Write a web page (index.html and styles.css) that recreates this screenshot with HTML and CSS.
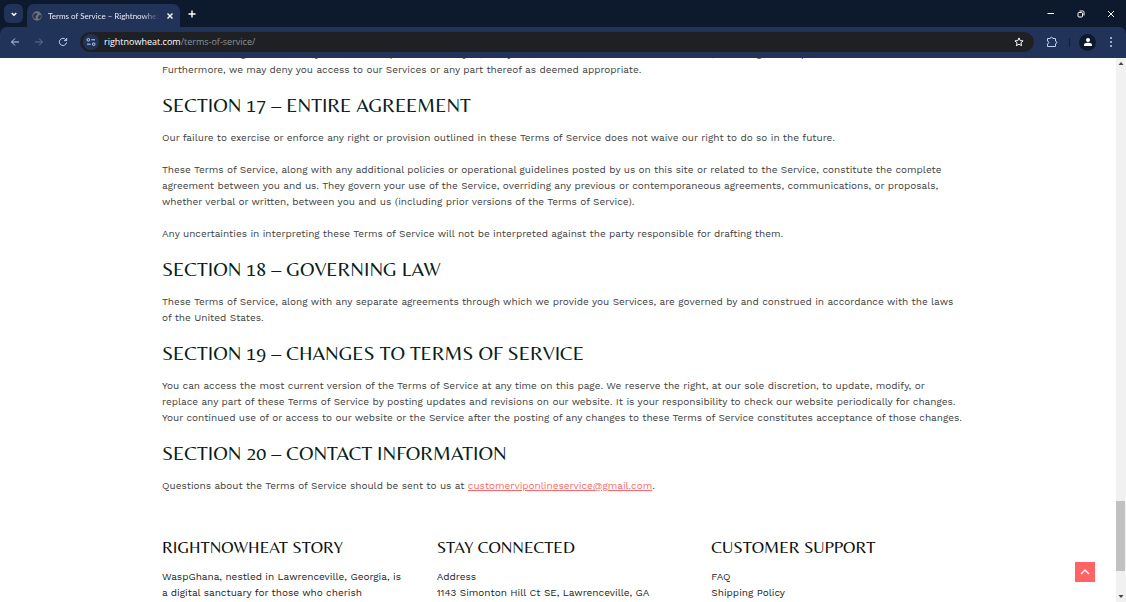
FILE: index.html
```html
<!DOCTYPE html>
<html lang="en">
<head>
<meta charset="utf-8">
<title>Terms of Service – Rightnowheat</title>
<link rel="stylesheet" href="styles.css">
</head>
<body>
<div class="browser">
  <header class="chrome">
    <div class="tabstrip">
      <button class="tab-search" type="button" aria-label="Search tabs">
        <svg width="8" height="8" viewBox="0 0 8 8" class="line bold"><path d="M1.700 3l2.300 2.300L6.300 3"/></svg>
      </button>
      <div class="tab">
        <svg width="10" height="10" viewBox="0 0 10 10"><circle cx="5" cy="5" r="4.700" fill="#6b7280"/><path d="M1.500 3.500L3.500 2l2 .5-.5 1.500-1.500 1 .5 1.500-1 1.500L1 6zM6.500 4.500l2.500-.5V6L7 8.500 6 7z" fill="#2c3448"/></svg>
        <span class="tab-title">Terms of Service – Rightnowheat</span>
        <button class="icon-button small" type="button" aria-label="Close tab">
          <svg width="8" height="8" viewBox="0 0 8 8" class="line bold"><path d="M1.500 1.500l5 5M6.500 1.500l-5 5"/></svg>
        </button>
      </div>
      <button class="icon-button new-tab" type="button" aria-label="New tab">
        <svg width="8" height="8" viewBox="0 0 8 8" class="line bold"><path d="M4 .5v7M.5 4h7"/></svg>
      </button>
      <div class="window-controls">
        <button class="icon-button" type="button" aria-label="Minimize"><svg width="8" height="8" viewBox="0 0 8 8" class="line"><path d="M.5 3.500h6.500"/></svg></button>
        <button class="icon-button" type="button" aria-label="Restore"><svg width="8" height="8" viewBox="0 0 8 8" class="line"><rect x="1" y="2.500" width="4.500" height="4.500" rx="1"/><path d="M2.500 1h3.200Q7 1 7 2.300v3.200"/></svg></button>
        <button class="icon-button" type="button" aria-label="Close window"><svg width="8" height="8" viewBox="0 0 8 8" class="line"><path d="M1 1l6 6M7 1L1 7"/></svg></button>
      </div>
    </div>
    <div class="toolbar">
      <button class="icon-button pale" type="button" aria-label="Back"><svg width="10" height="10" viewBox="0 0 10 10" class="line"><path d="M9 5H1.500M5 1.500L1.500 5 5 8.500"/></svg></button>
      <button class="icon-button dim" type="button" aria-label="Forward"><svg width="10" height="10" viewBox="0 0 10 10" class="line"><path d="M1 5h7.500M5 1.500L8.500 5 5 8.500"/></svg></button>
      <button class="icon-button pale" type="button" aria-label="Reload"><svg width="10" height="10" viewBox="0 0 10 10" class="line"><path d="M8.500 5.500A3.600 3.600 0 1 1 7.700 2.600L8.600 3.500M8.700 1v2.600H6.100"/></svg></button>
      <div class="omnibox">
        <button class="site-info" type="button" aria-label="View site information"><svg width="10" height="10" viewBox="0 0 10 10" class="line"><circle cx="2.300" cy="2.800" r="1.300"/><path d="M5.300 2.800H9M1 7.200h3.700"/><circle cx="7.700" cy="7.200" r="1.300"/></svg></button>
        <a class="url" href="#top"><span class="host">rightnowheat.com</span>/terms-of-service/</a>
        <button class="icon-button" type="button" aria-label="Bookmark this tab"><svg width="10" height="10" viewBox="0 0 10 10" class="line"><path d="M5 .9l1.200 2.700 2.900.3-2.200 1.900.7 2.900L5 7.200 2.400 8.700l.7-2.900L.9 3.900l2.900-.3z"/></svg></button>
      </div>
      <div class="actions">
        <button class="icon-button pale" type="button" aria-label="Extensions"><svg width="12" height="12" viewBox="0 0 12 12" class="line"><path d="M1.500 2.500h2.700a1.300 1.300 0 0 1 2.600 0h2.700v2.700a1.300 1.300 0 0 1 0 2.600v2.700h-8V7.800a1.300 1.300 0 0 0 0-2.600z"/></svg></button>
        <span class="divider"></span>
        <button class="profile" type="button" aria-label="Profile"><svg width="10" height="10" viewBox="0 0 10 10" fill="#fff"><circle cx="5" cy="3" r="2"/><path d="M1 9V8q0-2.200 4-2.200T9 8v1z"/></svg></button>
        <button class="icon-button pale" type="button" aria-label="Menu"><svg width="4" height="12" viewBox="0 0 4 12" fill="currentColor"><circle cx="2" cy="2" r="1"/><circle cx="2" cy="6" r="1"/><circle cx="2" cy="10" r="1"/></svg></button>
      </div>
    </div>
  </header>

  <div class="viewport">
    <div class="page" id="top">
      <main class="terms">
        <p>terminate this agreement at any time without prior notice to you, and you will remain liable for all amounts due, including costs up to then.<br>Furthermore, we may deny you access to our Services or any part thereof as deemed appropriate.</p>
        <h2>SECTION 17 – ENTIRE AGREEMENT</h2>
        <p>Our failure to exercise or enforce any right or provision outlined in these Terms of Service does not waive our right to do so in the future.</p>
        <p>These Terms of Service, along with any additional policies or operational guidelines posted by us on this site or related to the Service, constitute the complete<br>agreement between you and us. They govern your use of the Service, overriding any previous or contemporaneous agreements, communications, or proposals,<br>whether verbal or written, between you and us (including prior versions of the Terms of Service).</p>
        <p>Any uncertainties in interpreting these Terms of Service will not be interpreted against the party responsible for drafting them.</p>
        <h2>SECTION 18 – GOVERNING LAW</h2>
        <p>These Terms of Service, along with any separate agreements through which we provide you Services, are governed by and construed in accordance with the laws<br>of the United States.</p>
        <h2>SECTION 19 – CHANGES TO TERMS OF SERVICE</h2>
        <p>You can access the most current version of the Terms of Service at any time on this page. We reserve the right, at our sole discretion, to update, modify, or<br>replace any part of these Terms of Service by posting updates and revisions on our website. It is your responsibility to check our website periodically for changes.<br>Your continued use of or access to our website or the Service after the posting of any changes to these Terms of Service constitutes acceptance of those changes.</p>
        <h2>SECTION 20 – CONTACT INFORMATION</h2>
        <p>Questions about the Terms of Service should be sent to us at <a class="mail" href="mailto:customerviponlineservice@gmail.com">customerviponlineservice@gmail.com</a>.</p>
      </main>
      <footer class="footer">
        <section>
          <h3>RIGHTNOWHEAT STORY</h3>
          <p>WaspGhana, nestled in Lawrenceville, Georgia, is<br>a digital sanctuary for those who cherish</p>
        </section>
        <section>
          <h3>STAY CONNECTED</h3>
          <p>Address<br>1143 Simonton Hill Ct SE, Lawrenceville, GA</p>
        </section>
        <section>
          <h3>CUSTOMER SUPPORT</h3>
          <p><a href="#faq">FAQ</a><br><a href="#shipping">Shipping Policy</a></p>
        </section>
      </footer>
    </div>
    <div class="scrollbar">
      <svg width="6" height="4" viewBox="0 0 6 4"><path d="M3 0l2.500 3h-5z"/></svg>
      <div class="track"><div class="thumb"></div></div>
      <svg width="6" height="4" viewBox="0 0 6 4"><path d="M3 4L.5 1h5z"/></svg>
    </div>
    <button class="to-top" type="button" aria-label="Scroll to top"><svg width="10" height="10" viewBox="0 0 10 10" class="line bold"><path d="M1 7l4-4 4 4"/></svg></button>
  </div>
</div>
</body>
</html>
```
FILE: styles.css
```css
* {
  box-sizing: border-box;
}

body {
  margin: 0;
  background: #fff;
}

button {
  display: flex;
  align-items: center;
  justify-content: center;
  flex: none;
  margin: 0;
  padding: 0;
  border: 0;
  background: none;
  color: #fff;
}

svg {
  display: block;
  flex: none;
}

.line {
  fill: none;
  stroke: currentColor;
  stroke-width: 1;
}

.bold {
  stroke-width: 1.4;
}

.browser {
  display: flex;
  flex-direction: column;
  height: 100vh;
  overflow: hidden;
}

.chrome {
  flex: none;
  background: #0d1a2e;
  font-family: "Open Sans", "Noto Sans", sans-serif;
}

.tabstrip {
  display: flex;
  align-items: center;
  height: 27px;
  padding-left: 4px;
}

.tab-search {
  width: 19px;
  height: 19px;
  border-radius: 6px;
  background: #22335a;
}

.tab {
  display: flex;
  align-items: center;
  gap: 6px;
  align-self: flex-end;
  width: 153px;
  height: 23px;
  margin-left: 4px;
  padding: 0 5px;
  border-radius: 7px 7px 0 0;
  background: #22335a;
}

.tab-title {
  flex: 1;
  min-width: 0;
  overflow: hidden;
  color: #e6eaf2;
  font-family: Lato, sans-serif;
  font-size: 8px;
  line-height: 12px;
  white-space: nowrap;
  mask-image: linear-gradient(to right, #000 85%, transparent);
}

.icon-button {
  width: 24px;
  height: 20px;
}

.icon-button.small {
  width: 10px;
}

.pale {
  color: #c3d0f5;
}

.dim {
  color: #62719a;
}

.window-controls {
  display: flex;
  gap: 6px;
  margin-left: auto;
  padding-right: 3px;
}

.toolbar {
  display: flex;
  align-items: center;
  height: 30px;
  padding: 0 3px;
  border-radius: 7px 7px 0 0;
  background: #22335a;
}

.omnibox {
  display: flex;
  flex: 1;
  align-items: center;
  height: 20px;
  margin-left: 5px;
  padding: 0 3px;
  border-radius: 10px;
  background: #1f2023;
}

.site-info {
  width: 16px;
  height: 16px;
  border-radius: 8px;
  background: #22335a;
  color: #c3d0f5;
}

.url {
  flex: 1;
  margin-left: 5px;
  color: #8f9298;
  font-size: 9px;
  line-height: 16px;
  text-decoration: none;
}

.host {
  color: #fff;
}

.actions {
  display: flex;
  align-items: center;
  margin-left: 6px;
}

.divider {
  width: 1px;
  height: 9px;
  margin: 0 9px 0 5px;
  background: #101d38;
}

.profile {
  width: 17px;
  height: 17px;
  margin-right: 3px;
  border-radius: 9px;
  background: #0d1a2e;
}

.viewport {
  position: relative;
  display: flex;
  flex: 1;
  min-height: 0;
  border-top: 1px solid #22335a;
  overflow: hidden;
}

.page {
  flex: 1;
  min-width: 0;
  margin-top: -12px;
  color: #404040;
  font-family: "Work Sans", "DejaVu Sans", sans-serif;
  font-size: 10px;
  line-height: 16px;
}

.terms,
.footer {
  max-width: 824px;
  margin: 0 auto;
}

.terms {
  padding: 0 0 0 16px;
}

p,
h2,
h3 {
  margin: 0;
}

p {
  white-space: nowrap;
}

p + p {
  margin-top: 16px;
}

h2,
h3 {
  font-family: Belleza, Arsenal, Lato, sans-serif;
  font-weight: 400;
}

h2 {
  margin: 13px 0 11px;
  color: #0a1f1d;
  font-size: 20px;
  line-height: 28px;
}

.mail {
  color: #f9696b;
}

.footer {
  display: grid;
  grid-template-columns: repeat(3, 1fr);
  padding-top: 41px;
  color: #1c1c1c;
}

.footer section {
  padding-left: 16px;
}

.footer h3 {
  margin-bottom: 10px;
  color: #111;
  font-size: 17px;
  line-height: 24px;
}

.footer a {
  color: inherit;
  text-decoration: none;
}

.scrollbar {
  display: flex;
  flex: none;
  flex-direction: column;
  align-items: center;
  width: 10px;
  padding: 4px 0;
  background: #f1f1f1;
  fill: #444;
}

.track {
  display: flex;
  flex: 1;
  flex-direction: column;
  justify-content: flex-end;
  align-self: stretch;
  padding: 0 1px 23px 0;
}

.thumb {
  height: 70px;
  background: #c1c1c1;
}

.to-top {
  position: absolute;
  right: 31px;
  bottom: 20px;
  width: 20px;
  height: 20px;
  background: #ff6366;
}
```
